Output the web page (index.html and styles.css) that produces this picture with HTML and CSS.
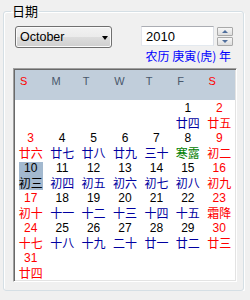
FILE: index.html
```html
<!DOCTYPE html>
<html lang="zh">
<head>
<meta charset="utf-8">
<title>日期</title>
<link rel="stylesheet" href="styles.css">
</head>
<body>
<fieldset class="group">
  <legend class="group-title">日期</legend>
  <div class="controls">
    <div class="combo"><span class="combo-text">October</span><span class="combo-arrow"></span></div>
    <div class="spin">
      <div class="spin-edit">2010</div>
      <div class="spin-btns">
        <div class="spin-btn"><span class="tri-up"></span></div>
        <div class="spin-btn"><span class="tri-down"></span></div>
      </div>
    </div>
  </div>
  <div class="lunar-year">农历 庚寅(虎) 年</div>
  <div class="calendar">
    <div class="cal-head">
      <span class="wd sun">S</span><span class="wd">M</span><span class="wd">T</span><span class="wd">W</span><span class="wd">T</span><span class="wd">F</span><span class="wd sun">S</span>
    </div>
    <div class="cal-days">
      <div class="cell"></div><div class="cell"></div><div class="cell"></div><div class="cell"></div><div class="cell"></div>
      <div class="cell"><div class="day"><span class="num">1</span><span class="lun">廿四</span></div></div>
      <div class="cell wkend"><div class="day"><span class="num">2</span><span class="lun">廿五</span></div></div>

      <div class="cell wkend"><div class="day"><span class="num">3</span><span class="lun">廿六</span></div></div>
      <div class="cell"><div class="day"><span class="num">4</span><span class="lun">廿七</span></div></div>
      <div class="cell"><div class="day"><span class="num">5</span><span class="lun">廿八</span></div></div>
      <div class="cell"><div class="day"><span class="num">6</span><span class="lun">廿九</span></div></div>
      <div class="cell"><div class="day"><span class="num">7</span><span class="lun">三十</span></div></div>
      <div class="cell term"><div class="day"><span class="num">8</span><span class="lun">寒露</span></div></div>
      <div class="cell wkend"><div class="day"><span class="num">9</span><span class="lun">初二</span></div></div>

      <div class="cell today"><div class="day"><span class="num">10</span><span class="lun">初三</span></div></div>
      <div class="cell"><div class="day"><span class="num">11</span><span class="lun">初四</span></div></div>
      <div class="cell"><div class="day"><span class="num">12</span><span class="lun">初五</span></div></div>
      <div class="cell"><div class="day"><span class="num">13</span><span class="lun">初六</span></div></div>
      <div class="cell"><div class="day"><span class="num">14</span><span class="lun">初七</span></div></div>
      <div class="cell"><div class="day"><span class="num">15</span><span class="lun">初八</span></div></div>
      <div class="cell wkend"><div class="day"><span class="num">16</span><span class="lun">初九</span></div></div>

      <div class="cell wkend"><div class="day"><span class="num">17</span><span class="lun">初十</span></div></div>
      <div class="cell"><div class="day"><span class="num">18</span><span class="lun">十一</span></div></div>
      <div class="cell"><div class="day"><span class="num">19</span><span class="lun">十二</span></div></div>
      <div class="cell"><div class="day"><span class="num">20</span><span class="lun">十三</span></div></div>
      <div class="cell"><div class="day"><span class="num">21</span><span class="lun">十四</span></div></div>
      <div class="cell"><div class="day"><span class="num">22</span><span class="lun">十五</span></div></div>
      <div class="cell wkend"><div class="day"><span class="num">23</span><span class="lun">霜降</span></div></div>

      <div class="cell wkend"><div class="day"><span class="num">24</span><span class="lun">十七</span></div></div>
      <div class="cell"><div class="day"><span class="num">25</span><span class="lun">十八</span></div></div>
      <div class="cell"><div class="day"><span class="num">26</span><span class="lun">十九</span></div></div>
      <div class="cell"><div class="day"><span class="num">27</span><span class="lun">二十</span></div></div>
      <div class="cell"><div class="day"><span class="num">28</span><span class="lun">廿一</span></div></div>
      <div class="cell"><div class="day"><span class="num">29</span><span class="lun">廿二</span></div></div>
      <div class="cell wkend"><div class="day"><span class="num">30</span><span class="lun">廿三</span></div></div>

      <div class="cell wkend"><div class="day"><span class="num">31</span><span class="lun">廿四</span></div></div>
    </div>
  </div>
</fieldset>
</body>
</html>
```
FILE: styles.css
```css
html, body {
  margin: 0;
  padding: 0;
  background: #f0f0f0;
}
body {
  font-family: "Liberation Sans", "Noto Sans CJK SC", sans-serif;
  font-size: 12px;
  color: #000;
}
.group {
  margin: 4px 6px 0 3px;
  padding: 8px 6px 8px 9px;
  border: 1px solid #d5dfe5;
  border-radius: 3px;
  box-shadow: inset 1px 1px 0 #fff, 1px 1px 0 #fff;
  min-inline-size: 0;
  height: 287px;
  box-sizing: border-box;
}
.group-title {
  font-family: "Noto Sans CJK SC", sans-serif;
  font-size: 13px;
  line-height: 14px;
  padding: 0 1px;
  margin-left: -2px;
}
.controls {
  display: flex;
  align-items: flex-start;
  gap: 29px;
  margin-left: 2px;
}
.combo {
  width: 97px;
  height: 22px;
  box-sizing: border-box;
  border: 1px solid #707070;
  border-radius: 3px;
  background: linear-gradient(#f2f2f2 0%, #ebebeb 50%, #dddddd 50%, #cfcfcf 100%);
  box-shadow: inset 0 0 0 1px #fbfbfb;
  display: flex;
  align-items: center;
  justify-content: space-between;
  padding: 0 3px 0 4px;
}
.combo-text {
  font-size: 12.5px;
  line-height: 14px;
}
.combo-arrow {
  width: 0;
  height: 0;
  border-left: 3.5px solid transparent;
  border-right: 3.5px solid transparent;
  border-top: 4px solid #000;
  margin-top: 1px;
}
.spin {
  display: flex;
  gap: 3px;
}
.spin-edit {
  width: 73px;
  height: 20px;
  box-sizing: border-box;
  background: #fff;
  border: 1px solid;
  border-color: #abadb3 #dbdfe6 #e3e9ef #e2e3ea;
  padding: 2px 0 0 4px;
  font-size: 13px;
  line-height: 15px;
}
.spin-btns {
  display: flex;
  flex-direction: column;
  gap: 1px;
  padding-top: 1px;
}
.spin-btn {
  width: 16px;
  height: 9px;
  box-sizing: border-box;
  border: 1px solid #a9a9a9;
  border-radius: 1px;
  background: linear-gradient(#f6f6f6, #dedede);
  display: flex;
  align-items: center;
  justify-content: center;
}
.tri-up, .tri-down {
  width: 0;
  height: 0;
  border-left: 3.5px solid transparent;
  border-right: 3.5px solid transparent;
}
.tri-up { border-bottom: 3px solid #4f6e9c; }
.tri-down { border-top: 3px solid #4f6e9c; }
.lunar-year {
  font-family: "Noto Sans CJK SC", sans-serif;
  font-size: 12px;
  line-height: 15px;
  color: #0000ff;
  text-align: right;
  padding-right: 6px;
  white-space: pre;
}
.calendar {
  margin-top: 5px;
  width: 224px;
  box-sizing: border-box;
  background: #fff;
  border: 1px solid;
  border-color: #a0a0a0 #fff #fff #a0a0a0;
  box-shadow: inset 1px 1px 0 #696969, inset -1px -1px 0 #e3e3e3;
  padding: 1px;
}
.cal-head {
  display: grid;
  grid-template-columns: repeat(7, 1fr);
  height: 30px;
  background: #c1cedb;
}
.wd {
  padding: 5px 0 0 5px;
  font-size: 11px;
  line-height: 12px;
  color: #4a586c;
}
.wd.sun { color: #ff0000; }
.cal-days {
  display: grid;
  grid-template-columns: repeat(7, 1fr);
  grid-auto-rows: 30px;
}
.cell {
  padding-top: 1px;
  text-align: center;
}
.day {
  display: inline-flex;
  flex-direction: column;
  align-items: center;
}
.num {
  font-size: 12px;
  line-height: 13px;
  color: #000;
}
.lun {
  font-family: "Noto Sans CJK SC", sans-serif;
  font-size: 12px;
  line-height: 15px;
  color: #0000a0;
}
.wkend .num, .wkend .lun { color: #ff0000; }
.term .lun { color: #008000; }
.today .day { background: #a3b9cf; }
.today .lun { color: #000; }
```
